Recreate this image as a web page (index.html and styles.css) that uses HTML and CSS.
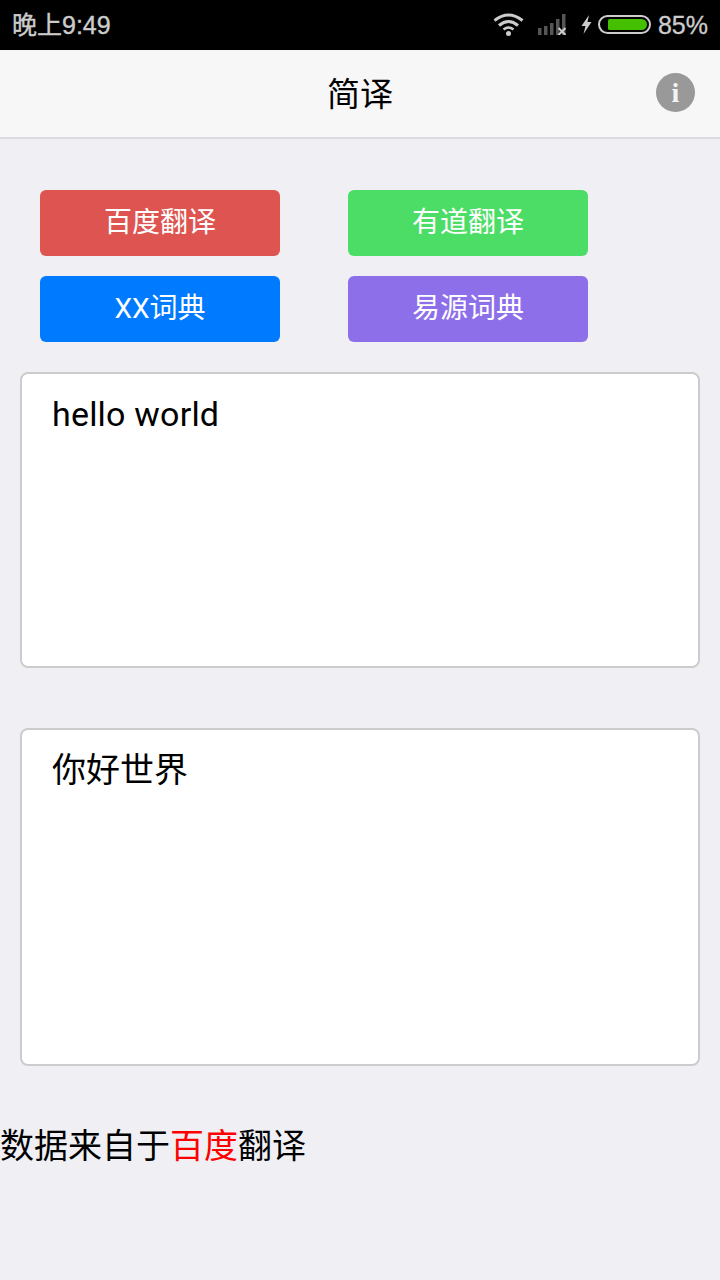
FILE: index.html
```html
<!DOCTYPE html>
<html lang="zh-CN">
<head>
    <meta charset="UTF-8">
    <meta name="viewport" content="width=device-width, initial-scale=1.0">
    <title>简译</title>
    <link rel="stylesheet" href="styles.css">
</head>
<body>
    <div class="status-bar">
        <span class="status-time">晚上9:49</span>
        <div class="status-icons">
            <svg class="icon-wifi" width="31" height="23" viewBox="0 0 31 23">
                <path d="M1.500 7.500 Q15.500 -3.500 29.500 7.500" fill="none" stroke="#ccc" stroke-width="3"/>
                <path d="M6 12.500 Q15.500 4.500 25 12.500" fill="none" stroke="#ccc" stroke-width="3"/>
                <path d="M10.500 16.500 Q15.500 12.500 20.500 16.500" fill="none" stroke="#ccc" stroke-width="2.500"/>
                <circle cx="15.500" cy="20.500" r="2.500" fill="#ccc"/>
            </svg>
            <svg class="icon-signal" width="28" height="21" viewBox="0 0 28 21">
                <rect x="0" y="14" width="3.500" height="7" fill="#555"/>
                <rect x="6" y="12" width="3.500" height="9" fill="#555"/>
                <rect x="12" y="9" width="3.500" height="12" fill="#555"/>
                <rect x="18" y="5" width="3.500" height="16" fill="#555"/>
                <rect x="24" y="0" width="3.500" height="21" fill="#555"/>
                <path d="M20.500 14 L27.500 21 M27.500 14 L20.500 21" stroke="#ccc" stroke-width="2"/>
            </svg>
            <svg class="icon-bolt" width="11" height="19" viewBox="0 0 11 19">
                <path d="M8 0 L0.500 11 H4.500 L2.500 19 L10.500 7 H6.500 Z" fill="#ccc"/>
            </svg>
            <div class="battery"><div class="battery-level"></div></div>
            <span class="status-percent">85%</span>
        </div>
    </div>

    <div class="nav-bar">
        <h1>简译</h1>
        <div class="info-btn">i</div>
    </div>

    <div class="btn-grid">
        <div class="btn btn-red">百度翻译</div>
        <div class="btn btn-green">有道翻译</div>
        <div class="btn btn-blue">XX词典</div>
        <div class="btn btn-purple">易源词典</div>
    </div>

    <div class="text-box box-input">hello world</div>
    <div class="text-box box-output">你好世界</div>

    <p class="source">数据来自于<span class="source-name">百度</span>翻译</p>
</body>
</html>
```

FILE: styles.css
```css
body {
    font-family: 'Roboto', 'Noto Sans CJK SC', sans-serif;
    background-color: #efeff4;
    color: #000000;
    margin: 0;
    padding: 0;
    height: 1280px;
    overflow: hidden;
}
.status-bar {
    height: 50px;
    background-color: #000000;
    color: #cccccc;
    display: flex;
    justify-content: space-between;
    align-items: center;
    padding: 0 12px;
    box-sizing: border-box;
    font-family: 'Liberation Sans', 'Noto Sans CJK SC', sans-serif;
    font-size: 25px;
    line-height: 50px;
}
.status-time {
    margin-top: -1px;
    -webkit-text-stroke: 0.4px #cccccc;
}
.status-percent {
    -webkit-text-stroke: 0.3px #cccccc;
}
.status-icons {
    display: flex;
    align-items: center;
    height: 50px;
}
.icon-wifi {
    margin: -1px 14px 0 0;
}
.icon-signal {
    margin: -1px 15px 0 0;
}
.icon-bolt {
    margin: -1px 6px 0 0;
}
.battery {
    width: 39px;
    height: 11px;
    border: 2px solid #cccccc;
    border-radius: 10px;
    padding: 2px 2px 2px 8px;
    margin: -1px 7px 0 0;
}
.battery-level {
    height: 100%;
    width: 100%;
    background-color: #44c000;
    border-radius: 2px 6px 6px 2px;
}
.nav-bar {
    height: 89px;
    background-color: #f7f7f8;
    border-bottom: 2px solid #dcdce0;
    box-sizing: border-box;
    display: flex;
    justify-content: center;
    align-items: center;
    position: relative;
}
.nav-bar h1 {
    margin: -4px 0 0 0;
    font-size: 33px;
    font-weight: 400;
}
.info-btn {
    position: absolute;
    left: 656px;
    top: 23px;
    width: 39px;
    height: 39px;
    border-radius: 50%;
    background-color: #999999;
    color: #f4f4f4;
    font-family: 'Liberation Serif', serif;
    font-weight: 700;
    font-size: 28px;
    line-height: 39px;
    text-align: center;
}
.btn-grid {
    display: grid;
    grid-template-columns: 240px 240px;
    column-gap: 68px;
    row-gap: 20px;
    padding: 51px 0 0 40px;
}
.btn {
    height: 66px;
    line-height: 66px;
    border-radius: 6px;
    color: #ffffff;
    font-size: 28px;
    text-align: center;
}
.btn-red {
    background-color: #dd5450;
}
.btn-green {
    background-color: #4cdd66;
}
.btn-blue {
    background-color: #007aff;
}
.btn-purple {
    background-color: #8e6fea;
}
.text-box {
    margin: 0 20px;
    background-color: #ffffff;
    border: 2px solid #cccccc;
    border-radius: 8px;
    box-sizing: border-box;
    padding: 20px 30px;
    font-size: 34px;
    line-height: 40px;
}
.box-input {
    margin-top: 30px;
    height: 296px;
    letter-spacing: 0.2px;
}
.box-output {
    margin-top: 60px;
    height: 338px;
}
.source {
    margin: 46px 0 0 0;
    font-size: 34px;
    line-height: 68px;
}
.source-name {
    color: #ff0000;
}
```
